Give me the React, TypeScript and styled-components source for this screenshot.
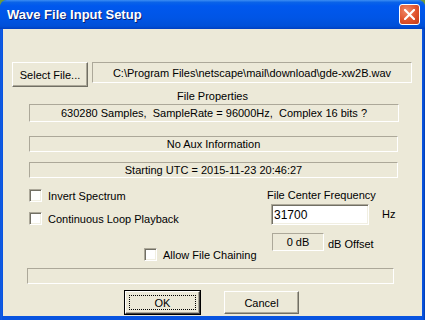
import React, { useState } from "react";
import styled, { createGlobalStyle, css } from "styled-components";

const GlobalStyle = createGlobalStyle`
  html, body {
    margin: 0;
    padding: 0;
    background: #6e9a3c;
  }
  * {
    box-sizing: border-box;
  }
`;

const Window = styled.div`
  width: 425px;
  height: 320px;
  display: flex;
  flex-direction: column;
  background: #0054e3;
  border-radius: 7px 7px 0 0;
  overflow: hidden;
  font-family: "Liberation Sans", Arial, sans-serif;
  font-size: 11px;
  color: #000;
`;

const TitleBar = styled.div`
  height: 29px;
  flex: none;
  display: flex;
  align-items: center;
  justify-content: space-between;
  padding: 0 5px 0 7px;
  background: linear-gradient(
    #3c8ef3 0%,
    #0a63e8 8%,
    #0058ee 20%,
    #0055e6 60%,
    #0050d8 90%,
    #003fc0 100%
  );
`;

const Title = styled.span`
  font-family: "Liberation Sans", Arial, sans-serif;
  font-weight: bold;
  font-size: 13px;
  color: #fff;
  text-shadow: 1px 1px 0 #0a1e6e;
`;

const CloseButton = styled.div`
  width: 21px;
  height: 21px;
  border: 1px solid #fff;
  border-radius: 3px;
  background: radial-gradient(circle at 35% 30%, #f08a6a 0%, #e0522c 55%, #c13a18 100%);
  display: flex;
  align-items: center;
  justify-content: center;
`;

const Frame = styled.div`
  flex: 1;
  display: flex;
  padding: 0 3px 4px 3px;
  background: linear-gradient(90deg, #0a4fd0, #1561e8 1px, #0854e0 2px, #0854e0 calc(100% - 2px), #003cb0);
`;

const Client = styled.div`
  flex: 1;
  background: #ece9d8;
  display: flex;
  flex-direction: column;
  padding-top: 33px;
`;

const Row = styled.div<{ $left?: number; $top?: number }>`
  display: flex;
  align-items: flex-start;
  margin-left: ${(p) => p.$left ?? 0}px;
  margin-top: ${(p) => p.$top ?? 0}px;
`;

const raised = css`
  background: #ece9d8;
  border: 1px solid;
  border-color: #fff #716f64 #716f64 #fff;
  box-shadow: inset -1px -1px 0 #aca899;
`;

const Button = styled.button<{ $width: number; $height: number; $default?: boolean }>`
  ${raised}
  width: ${(p) => p.$width}px;
  height: ${(p) => p.$height}px;
  padding: 0;
  font: inherit;
  color: #000;
  display: flex;
  align-items: center;
  justify-content: center;
  position: relative;
  ${(p) =>
    p.$default &&
    css`
      outline: 1px solid #000;
      outline-offset: 0;
      border-color: #fff #404040 #404040 #fff;
      &::after {
        content: "";
        position: absolute;
        inset: 3px;
        border: 1px dotted #000;
      }
    `}
`;

const StaticBox = styled.div<{ $width: number; $height: number; $align?: string }>`
  width: ${(p) => p.$width}px;
  height: ${(p) => p.$height}px;
  border: 1px solid;
  border-color: #aca899 #fff #fff #aca899;
  display: flex;
  align-items: center;
  justify-content: ${(p) => p.$align ?? "center"};
  white-space: nowrap;
`;

const Label = styled.div`
  white-space: nowrap;
`;

const CenterLabel = styled.div`
  text-align: center;
  margin-top: 2px;
  height: 14px;
  line-height: 14px;
`;

const Lower = styled.div`
  display: flex;
  margin-top: 11px;
`;

const LeftCol = styled.div`
  width: 264px;
  display: flex;
  flex-direction: column;
`;

const RightCol = styled.div`
  display: flex;
  flex-direction: column;
`;

const CheckRow = styled.label<{ $left: number; $top: number }>`
  display: flex;
  align-items: center;
  gap: 6px;
  margin-left: ${(p) => p.$left}px;
  margin-top: ${(p) => p.$top}px;
  height: 13px;
  white-space: nowrap;
`;

const Box = styled.span`
  width: 13px;
  height: 13px;
  flex: none;
  background: #fff;
  border: 1px solid;
  border-color: #aca899 #fff #fff #aca899;
  box-shadow: inset 1px 1px 0 #716f64, inset -1px -1px 0 #f1efe2;
  display: flex;
  align-items: center;
  justify-content: center;
`;

const Edit = styled.input`
  width: 98px;
  height: 21px;
  border: 1px solid;
  border-color: #aca899 #fff #fff #aca899;
  box-shadow: inset 1px 1px 0 #716f64, inset -1px -1px 0 #f1efe2;
  background: #fff;
  font: inherit;
  font-size: 12px;
  padding: 0 2px;
  outline: none;
`;

const Buttons = styled.div`
  display: flex;
  gap: 24px;
  margin-left: 122px;
  margin-top: 7px;
`;

function Check({
  label,
  left,
  top,
}: {
  label: string;
  left: number;
  top: number;
}) {
  const [on, setOn] = useState(false);
  return (
    <CheckRow $left={left} $top={top} onClick={() => setOn(!on)}>
      <Box>
        {on && (
          <svg width="7" height="7" viewBox="0 0 7 7">
            <path d="M0 3l2 2 5-5v2l-5 5-2-2z" fill="#000" />
          </svg>
        )}
      </Box>
      {label}
    </CheckRow>
  );
}

export default function App() {
  const [freq, setFreq] = useState("31700");

  return (
    <>
      <GlobalStyle />
      <Window>
        <TitleBar>
          <Title>Wave File Input Setup</Title>
          <CloseButton>
            <svg width="11" height="11" viewBox="0 0 11 11">
              <path d="M1 1l9 9M10 1l-9 9" stroke="#fff" strokeWidth="2.2" strokeLinecap="square" />
            </svg>
          </CloseButton>
        </TitleBar>
        <Frame>
          <Client>
            <Row $left={9}>
              <Button $width={76} $height={25}>
                Select File...
              </Button>
              <StaticBox $width={320} $height={21} style={{ marginLeft: 4 }}>
                C:\Program Files\netscape\mail\download\gde-xw2B.wav
              </StaticBox>
            </Row>
            <CenterLabel>File Properties</CenterLabel>
            <Row $left={26} $top={1}>
              <StaticBox $width={370} $height={18}>
                630280 Samples,&nbsp; SampleRate = 96000Hz,&nbsp; Complex 16 bits ?
              </StaticBox>
            </Row>
            <Row $left={26} $top={14}>
              <StaticBox $width={369} $height={16}>
                No Aux Information
              </StaticBox>
            </Row>
            <Row $left={26} $top={10}>
              <StaticBox $width={369} $height={16}>
                Starting UTC = 2015-11-23 20:46:27
              </StaticBox>
            </Row>
            <Lower>
              <LeftCol>
                <Check label="Invert Spectrum" left={26} top={0} />
                <Check label="Continuous Loop Playback" left={26} top={10} />
                <Check label="Allow File Chaining" left={141} top={23} />
              </LeftCol>
              <RightCol>
                <Label>File Center Frequency</Label>
                <Row $left={4} $top={3}>
                  <Edit value={freq} onChange={(e) => setFreq(e.target.value)} />
                  <Label style={{ marginLeft: 13, marginTop: 4 }}>Hz</Label>
                </Row>
                <Row $left={5} $top={8}>
                  <StaticBox $width={52} $height={18}>
                    0 dB
                  </StaticBox>
                  <Label style={{ marginLeft: 4, marginTop: 5 }}>dB Offset</Label>
                </Row>
              </RightCol>
            </Lower>
            <Row $left={24} $top={7}>
              <StaticBox $width={367} $height={16} />
            </Row>
            <Buttons>
              <Button $width={75} $height={23} $default>
                OK
              </Button>
              <Button $width={75} $height={23}>
                Cancel
              </Button>
            </Buttons>
          </Client>
        </Frame>
      </Window>
    </>
  );
}
